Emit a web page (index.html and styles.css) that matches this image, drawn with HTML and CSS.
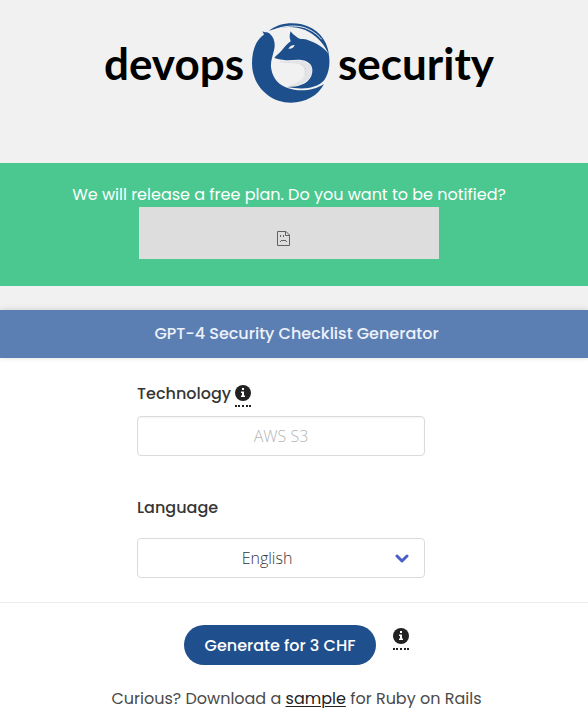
FILE: index.html
```html
<!DOCTYPE html>
<html lang="en">
  <head>
    <meta charset="UTF-8" />
    <meta name="viewport" content="width=device-width, initial-scale=1.0" />
    <title>GPT-4 Security Checklist Generator</title>
    <link rel="stylesheet" href="styles.css">
  </head>
  <body>
    <header class="header">
      <span>devops</span>
      <svg class="logo" viewBox="20 20 240 246" aria-hidden="true">
        <path fill="#1e4f8d" d="M54 48C63 54 68 47 78 57C90 68 94 87 89 105C84 126 77 141 81 162C86 191 105 210 130 218C163 230 207 227 239 206C222 240 184 262 140 262C75 262 23 210 23 144C23 103 37 71 59 58C58 55 56 52 54 48Z"/>
        <path fill="#1e4f8d" d="M139 48C145 57 151 60 160 67C169 73 176 69 188 73C215 82 238 96 253 115C258 137 256 171 240 194C219 219 178 224 128 215C162 215 190 207 201 182C211 156 198 137 171 134C151 132 134 137 115 133C105 132 96 130 90 127C97 119 106 112 114 103C122 93 130 84 139 78C135 67 135 58 139 48Z"/>
        <path fill="#e3e4e7" d="M108 136C132 142 152 131 174 137C200 143 208 160 199 181C190 202 168 210 142 212C162 204 178 198 182 182C183 167 179 150 164 143C149 137 128 143 108 136Z"/>
        <path fill="#f1f1f1" d="M132 100C137 92 143 89 151 89C149 97 142 101 132 100Z"/>
        <path fill="none" stroke="#c4c7cc" stroke-width="2" stroke-dasharray="5 3" d="M108 139C139 145 170 137 181 157C190 178 173 203 134 213"/>
        <path fill="#1e4f8d" d="M74 46C99 25 138 19 172 27C217 38 248 70 254 118C240 88 218 60 183 44C148 30 111 33 74 46Z"/>
        <path fill="none" stroke="#f1f1f1" stroke-width="3" d="M91 43C121 31 153 29 181 37C205 46 220 58 232 72"/>
      </svg>
      <span>security</span>
    </header>

    <section class="banner">
      <p>We will release a free plan. Do you want to be notified?</p>
      <div class="signup-frame">
        <svg class="sad-file" viewBox="0 0 13 15" role="img" aria-label="Content unavailable">
          <path fill="none" stroke="#5f6163" d="M.5.5H9L12.5 4V14.5H.5ZM8.5.5V4.5H12.5"/>
          <path fill="#5f6163" d="M3 4h1v2H3zM6 4h1v2H6zM4 9h5v1H4zM3 10h1v1H3zM9 10h1v1H9z"/>
        </svg>
      </div>
    </section>

    <main class="card">
      <h1 class="card-title">GPT-4 Security Checklist Generator</h1>
      <form>
        <div class="fields">
          <div class="label-row">
            <label for="technology">Technology</label>
            <span class="info" title="Name of the technology">
              <svg viewBox="0 0 16 16" aria-hidden="true">
                <circle cx="8" cy="8" r="8" fill="currentColor"/>
                <path fill="#fff" d="M7 3h2v2H7zM6 6.500h3v4h1V12H6v-1.500h1V8H6z"/>
              </svg>
            </span>
          </div>
          <input class="control" id="technology" type="text" placeholder="AWS S3">
          <div class="label-row label-language">
            <label for="language">Language</label>
          </div>
          <div class="select">
            <select class="control" id="language">
              <option>English</option>
              <option>German</option>
              <option>French</option>
            </select>
            <svg class="arrow" viewBox="0 0 14 9" aria-hidden="true">
              <path fill="none" stroke="#485fc7" stroke-width="3" stroke-linecap="round" stroke-linejoin="round" d="M2 2l5 5 5-5"/>
            </svg>
          </div>
        </div>

        <div class="actions">
          <div class="action-row">
            <button class="generate" type="submit">Generate for 3 CHF</button>
            <span class="info" title="One checklist per payment">
              <svg viewBox="0 0 16 16" aria-hidden="true">
                <circle cx="8" cy="8" r="8" fill="currentColor"/>
                <path fill="#fff" d="M7 3h2v2H7zM6 6.500h3v4h1V12H6v-1.500h1V8H6z"/>
              </svg>
            </span>
          </div>
          <p class="sample">Curious? Download a <a href="#sample">sample</a> for Ruby on Rails</p>
        </div>
      </form>
    </main>
  </body>
</html>
```

FILE: styles.css
```css
* {
  box-sizing: border-box;
}

body {
  margin: 0;
  background-color: #f1f1f1;
  color: #363636;
  font-family: Poppins, Inter, sans-serif;
  font-size: 16px;
  line-height: 24px;
}

p,
h1 {
  margin: 0;
}

.header {
  display: flex;
  justify-content: center;
  align-items: center;
  gap: 7px;
  padding: 22px 0 59px 10px;
  color: #000;
  font-family: Lato, sans-serif;
  font-size: 44px;
  font-weight: 700;
}

.logo {
  width: 80px;
  height: 82px;
}

.banner {
  padding: 20px 22px 27px 12px;
  background-color: #4ac88f;
  color: #fff;
  text-align: center;
}

.signup-frame {
  display: flex;
  justify-content: center;
  align-items: center;
  width: 300px;
  height: 52px;
  margin: 0 auto;
  padding: 10px 12px 0 0;
  background-color: #ddd;
}

.sad-file {
  width: 13px;
  height: 15px;
}

.card {
  margin-top: 24px;
  background-color: #fff;
  box-shadow: 0 0 8px rgba(10, 10, 10, 0.1);
}

.card-title {
  padding: 12px 0 12px 5px;
  background-color: #5c7fb3;
  box-shadow: 0 1px 4px rgba(10, 10, 10, 0.1);
  color: #edf2fa;
  font-size: 16px;
  font-weight: 500;
  line-height: 24px;
  text-align: center;
}

.fields {
  display: flex;
  flex-direction: column;
  align-items: center;
  padding: 24px 26px 24px 0;
}

.label-row {
  display: flex;
  gap: 4px;
  width: 288px;
  height: 24px;
  margin-bottom: 10px;
  font-weight: 500;
}

.label-language {
  margin-top: 40px;
  margin-bottom: 18px;
}

.info {
  align-self: flex-start;
  width: 16px;
  margin-top: 3px;
  padding-bottom: 4px;
  border-bottom: 2px dotted currentColor;
  color: #222;
  line-height: 0;
}

.info svg {
  width: 16px;
  height: 16px;
}

.control {
  width: 288px;
  height: 40px;
  padding: 4px 12px;
  border: 1px solid #dbdbdb;
  border-radius: 4px;
  background-color: #fff;
  color: #363636;
  font-family: "Open Sans", sans-serif;
  font-size: 16px;
  font-weight: 300;
  text-align: center;
}

input.control {
  box-shadow: inset 0 1px 2px rgba(10, 10, 10, 0.05);
}

.control::placeholder {
  color: #b5b5b5;
}

.select {
  position: relative;
}

.select select {
  display: block;
  padding-right: 40px;
  appearance: none;
  text-align-last: center;
}

.arrow {
  position: absolute;
  top: 16px;
  right: 16px;
  width: 14px;
  height: 9px;
  pointer-events: none;
}

.actions {
  padding: 22px 0 8px;
  border-top: 1px solid #ededed;
}

.action-row {
  display: flex;
  justify-content: center;
  gap: 17px;
  padding-left: 5px;
}

.generate {
  width: 192px;
  height: 40px;
  border: none;
  border-radius: 20px;
  background-color: #1f4f8c;
  color: #fff;
  font-family: inherit;
  font-size: 16px;
  font-weight: 500;
  cursor: pointer;
}

.sample {
  margin-top: 22px;
  padding-left: 5px;
  color: #4a4a4a;
  text-align: center;
}

.sample a {
  color: #222;
  text-underline-offset: 2px;
}
```
